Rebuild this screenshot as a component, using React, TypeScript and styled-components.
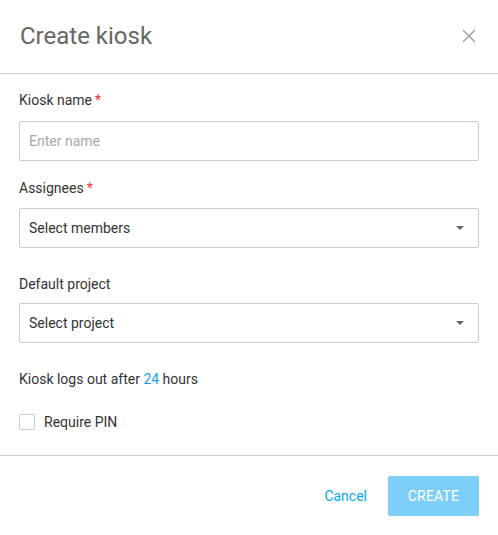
import React, { useState } from "react";
import styled, { createGlobalStyle } from "styled-components";

const GlobalStyle = createGlobalStyle`
  html, body {
    margin: 0;
    padding: 0;
    background: #fff;
  }
  body {
    font-family: Roboto, "Liberation Sans", Arial, sans-serif;
    -webkit-font-smoothing: antialiased;
  }
`;

const Dialog = styled.div`
  width: 498px;
  height: 535px;
  background: #fff;
  display: flex;
  flex-direction: column;
  box-sizing: border-box;
`;

const Header = styled.div`
  height: 74px;
  flex-shrink: 0;
  box-sizing: border-box;
  border-bottom: 1px solid #c6ced6;
  display: flex;
  align-items: center;
  justify-content: space-between;
  padding: 0 20px 2px 20px;
`;

const Title = styled.h2`
  margin: 0;
  font-size: 24px;
  font-weight: 400;
  color: #666;
  letter-spacing: 0;
`;

const CloseButton = styled.button`
  border: none;
  background: none;
  padding: 0;
  width: 14px;
  height: 14px;
  margin-right: 2px;
  cursor: pointer;
  display: flex;
`;

const Body = styled.div`
  flex: 1;
  min-height: 0;
  padding: 16px 19px 0 19px;
  display: flex;
  flex-direction: column;
`;

const Field = styled.div<{ $gap: number }>`
  display: flex;
  flex-direction: column;
  margin-bottom: ${(p) => p.$gap}px;
`;

const Label = styled.label<{ $gap?: number }>`
  font-size: 14px;
  line-height: 20px;
  color: #333;
  margin-bottom: ${(p) => p.$gap ?? 11}px;
`;

const Required = styled.span`
  color: #f0303a;
  margin-left: 3px;
`;

const TextInput = styled.input`
  height: 40px;
  box-sizing: border-box;
  border: 1px solid #c6ced6;
  border-radius: 2px;
  padding: 0 9px;
  font-family: inherit;
  font-size: 14px;
  color: #333;
  outline: none;
  &::placeholder {
    color: #a8a8a8;
  }
`;

const SelectBox = styled.div`
  height: 40px;
  box-sizing: border-box;
  border: 1px solid #c6ced6;
  border-radius: 2px;
  padding: 0 14px 0 9px;
  display: flex;
  align-items: center;
  justify-content: space-between;
  font-size: 14px;
  color: #333;
  cursor: pointer;
`;

const Caret = styled.span`
  width: 0;
  height: 0;
  border-left: 4px solid transparent;
  border-right: 4px solid transparent;
  border-top: 4px solid #666;
`;

const Info = styled.div`
  font-size: 14px;
  line-height: 20px;
  color: #333;
  margin-bottom: 25px;
`;

const Highlight = styled.span`
  color: #1e9ee8;
`;

const CheckRow = styled.label`
  display: flex;
  align-items: center;
  gap: 9px;
  font-size: 14px;
  color: #333;
  cursor: pointer;
`;

const CheckBox = styled.span<{ $checked: boolean }>`
  width: 16px;
  height: 16px;
  box-sizing: border-box;
  border: 1px solid #c6ced6;
  border-radius: 1px;
  background: ${(p) => (p.$checked ? "#03a9f4" : "#fff")};
`;

const Footer = styled.div`
  height: 80px;
  flex-shrink: 0;
  box-sizing: border-box;
  border-top: 1px solid #c6ced6;
  display: flex;
  align-items: center;
  justify-content: flex-end;
  padding: 1px 19px 0 0;
  gap: 21px;
`;

const LinkButton = styled.button`
  border: none;
  background: none;
  font-family: inherit;
  font-size: 14px;
  color: #03a9f4;
  padding: 0;
  cursor: pointer;
`;

const PrimaryButton = styled.button`
  width: 91px;
  height: 40px;
  border: none;
  border-radius: 2px;
  background: #7dcef8;
  color: #fff;
  font-family: inherit;
  font-size: 14px;
  text-transform: uppercase;
  letter-spacing: 0.2px;
  cursor: default;
`;

const App = () => {
  const [name, setName] = useState("");
  const [requirePin, setRequirePin] = useState(false);

  return (
    <>
      <GlobalStyle />
      <Dialog>
        <Header>
          <Title>Create kiosk</Title>
          <CloseButton aria-label="Close">
            <svg width="14" height="14" viewBox="0 0 14 14">
              <path d="M1 1 L13 13 M13 1 L1 13" stroke="#8a96a3" strokeWidth="1.1" />
            </svg>
          </CloseButton>
        </Header>
        <Body>
          <Field $gap={17}>
            <Label>
              Kiosk name<Required>*</Required>
            </Label>
            <TextInput
              placeholder="Enter name"
              value={name}
              onChange={(e) => setName(e.target.value)}
            />
          </Field>
          <Field $gap={26}>
            <Label $gap={10}>
              Assignees<Required>*</Required>
            </Label>
            <SelectBox>
              Select members
              <Caret />
            </SelectBox>
          </Field>
          <Field $gap={26}>
            <Label $gap={9}>Default project</Label>
            <SelectBox>
              Select project
              <Caret />
            </SelectBox>
          </Field>
          <Info>
            Kiosk logs out after <Highlight>24</Highlight> hours
          </Info>
          <CheckRow onClick={() => setRequirePin(!requirePin)}>
            <CheckBox $checked={requirePin} />
            Require PIN
          </CheckRow>
        </Body>
        <Footer>
          <LinkButton>Cancel</LinkButton>
          <PrimaryButton>Create</PrimaryButton>
        </Footer>
      </Dialog>
    </>
  );
};

export default App;
